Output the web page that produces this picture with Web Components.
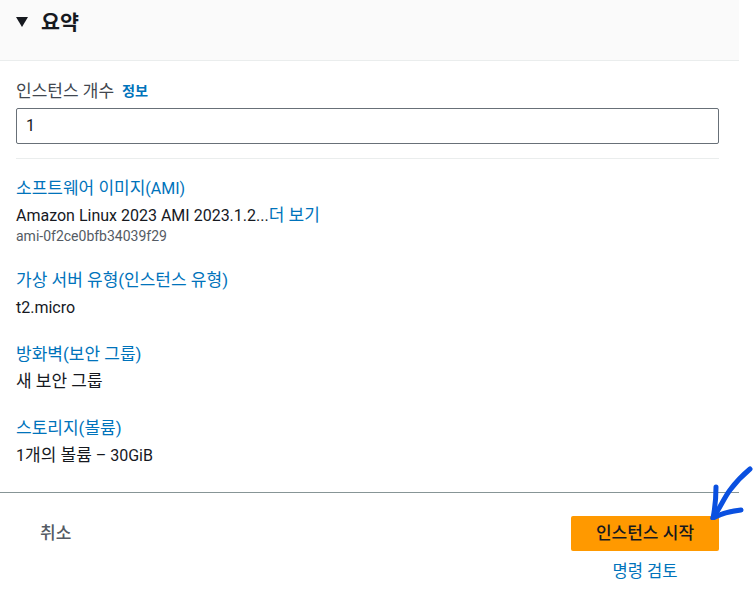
<!DOCTYPE html>
<html lang="ko">
<head>
<meta charset="utf-8">
<title>요약</title>
<style>
html, body { margin: 0; padding: 0; background: #fff; }
body { width: 753px; height: 594px; overflow: hidden; font-family: Roboto, "Noto Sans CJK KR", sans-serif; font-size: 16px; color: #16191f; }
/* hangul runs are set a bit larger than the latin around them */
.k { font-size: 17px; }
</style>
</head>
<body>
<summary-panel>
	<summary-item sub="ami-0f2ce0bfb34039f29">
		<span slot="label"><span class="k">소프트웨어 이미지</span>(AMI)</span>
		Amazon Linux 2023 AMI 2023.1.2...<a class="k" style="color:#0073bb">더 보기</a>
	</summary-item>
	<summary-item>
		<span slot="label" class="k">가상 서버 유형(인스턴스 유형)</span>
		t2.micro
	</summary-item>
	<summary-item>
		<span slot="label" class="k">방화벽(보안 그룹)</span>
		<span class="k">새 보안 그룹</span>
	</summary-item>
	<summary-item>
		<span slot="label" class="k">스토리지(볼륨)</span>
		1<span class="k">개의 볼륨</span> – 30GiB
	</summary-item>
</summary-panel>
<script>
(function() {
	let panelTemplate = document.createElement("template");
	panelTemplate.innerHTML = `
		<style>
		:host { display: block; width: 739px; position: relative; font-size: 17px; }
		header {
			display: flex;
			align-items: flex-start;
			gap: 13px;
			height: 61px;
			box-sizing: border-box;
			padding: 10px 16px 0;
			background: #fafafa;
			border-bottom: 1px solid #eaeded;
		}
		header svg { margin-top: 7px; }
		h2 { margin: 0; font-size: 20.6px; line-height: 26px; font-weight: 700; }
		.body { padding: 19px 20px 0 16px; }
		.label { display: flex; gap: 8px; height: 22px; line-height: 22px; color: #414750; }
		.label a { color: #0073bb; font-size: 14.2px; font-weight: 700; }
		.field {
			box-sizing: border-box;
			height: 36px;
			margin-top: 6px;
			padding: 0 9px;
			line-height: 34px;
			border: 1px solid #687078;
			border-radius: 2px;
			font-size: 16px;
		}
		hr { margin: 14px 0 0; border: 0; border-top: 1px solid #eaeded; }
		.items { display: flex; flex-direction: column; gap: 27px; padding-top: 19px; }
		footer {
			display: flex;
			justify-content: space-between;
			align-items: flex-start;
			margin-top: 27px;
			padding: 23px 20px 0 24px;
			border-top: 1px solid #879596;
		}
		.cancel { padding: 0 16px; line-height: 35px; color: #545b64; font-weight: 500; }
		.actions { display: flex; flex-direction: column; align-items: center; gap: 10px; }
		.launch {
			width: 148px; height: 35px; line-height: 35px; text-align: center;
			background: #ff9900; border-radius: 2px; font-weight: 500; color: #16191f;
		}
		.review { color: #0073bb; line-height: 22px; font-size: 16.6px; }
		.arrow { position: absolute; left: 700px; top: 460px; }
		</style>
		<header>
			<svg width="12" height="10" viewBox="0 0 12 10"><path d="M0 0H12L6 10Z" fill="#16191f"/></svg>
			<h2>요약</h2>
		</header>
		<div class="body">
			<div class="label"><span>인스턴스 개수</span><a>정보</a></div>
			<div class="field">1</div>
			<hr>
			<div class="items"><slot></slot></div>
		</div>
		<footer>
			<span class="cancel">취소</span>
			<div class="actions">
				<div class="launch">인스턴스 시작</div>
				<a class="review">명령 검토</a>
			</div>
		</footer>
		<svg class="arrow" width="53" height="60" viewBox="0 0 53 60" fill="none" stroke="#0a50e0" stroke-width="5" stroke-linecap="round" stroke-linejoin="round">
			<path d="M50 9C44 14 36 22 30 30C24 38 20 48 13 58"/>
			<path d="M16 27C16 38 15 48 13 58C22 53 32 51 41 50"/>
		</svg>
	`;

	let itemTemplate = document.createElement("template");
	itemTemplate.innerHTML = `
		<style>
		:host { display: block; font-size: 16px; }
		.label { height: 20px; color: #0073bb; line-height: 20px; }
		.value { height: 20px; margin-top: 7px; line-height: 21px; }
		.sub { margin-top: 4px; color: #545b64; font-size: 14px; line-height: 14px; }
		</style>
		<div class="label"><slot name="label"></slot></div>
		<div class="value"><slot></slot></div>
		<div class="sub"></div>
	`;

	class SummaryPanel extends HTMLElement {
		constructor() {
			super();
			this._shadowRoot = this.attachShadow({mode: "open"});
			this._shadowRoot.appendChild(panelTemplate.content.cloneNode(true));
		}
	}

	class SummaryItem extends HTMLElement {
		constructor() {
			super();
			this._shadowRoot = this.attachShadow({mode: "open"});
			this._shadowRoot.appendChild(itemTemplate.content.cloneNode(true));
		}
		connectedCallback() {
			let sub = this._shadowRoot.querySelector(".sub");
			if (this.hasAttribute("sub")) sub.textContent = this.getAttribute("sub");
			else sub.remove();
		}
	}

	customElements.define("summary-panel", SummaryPanel);
	customElements.define("summary-item", SummaryItem);
})();
</script>
</body>
</html>
